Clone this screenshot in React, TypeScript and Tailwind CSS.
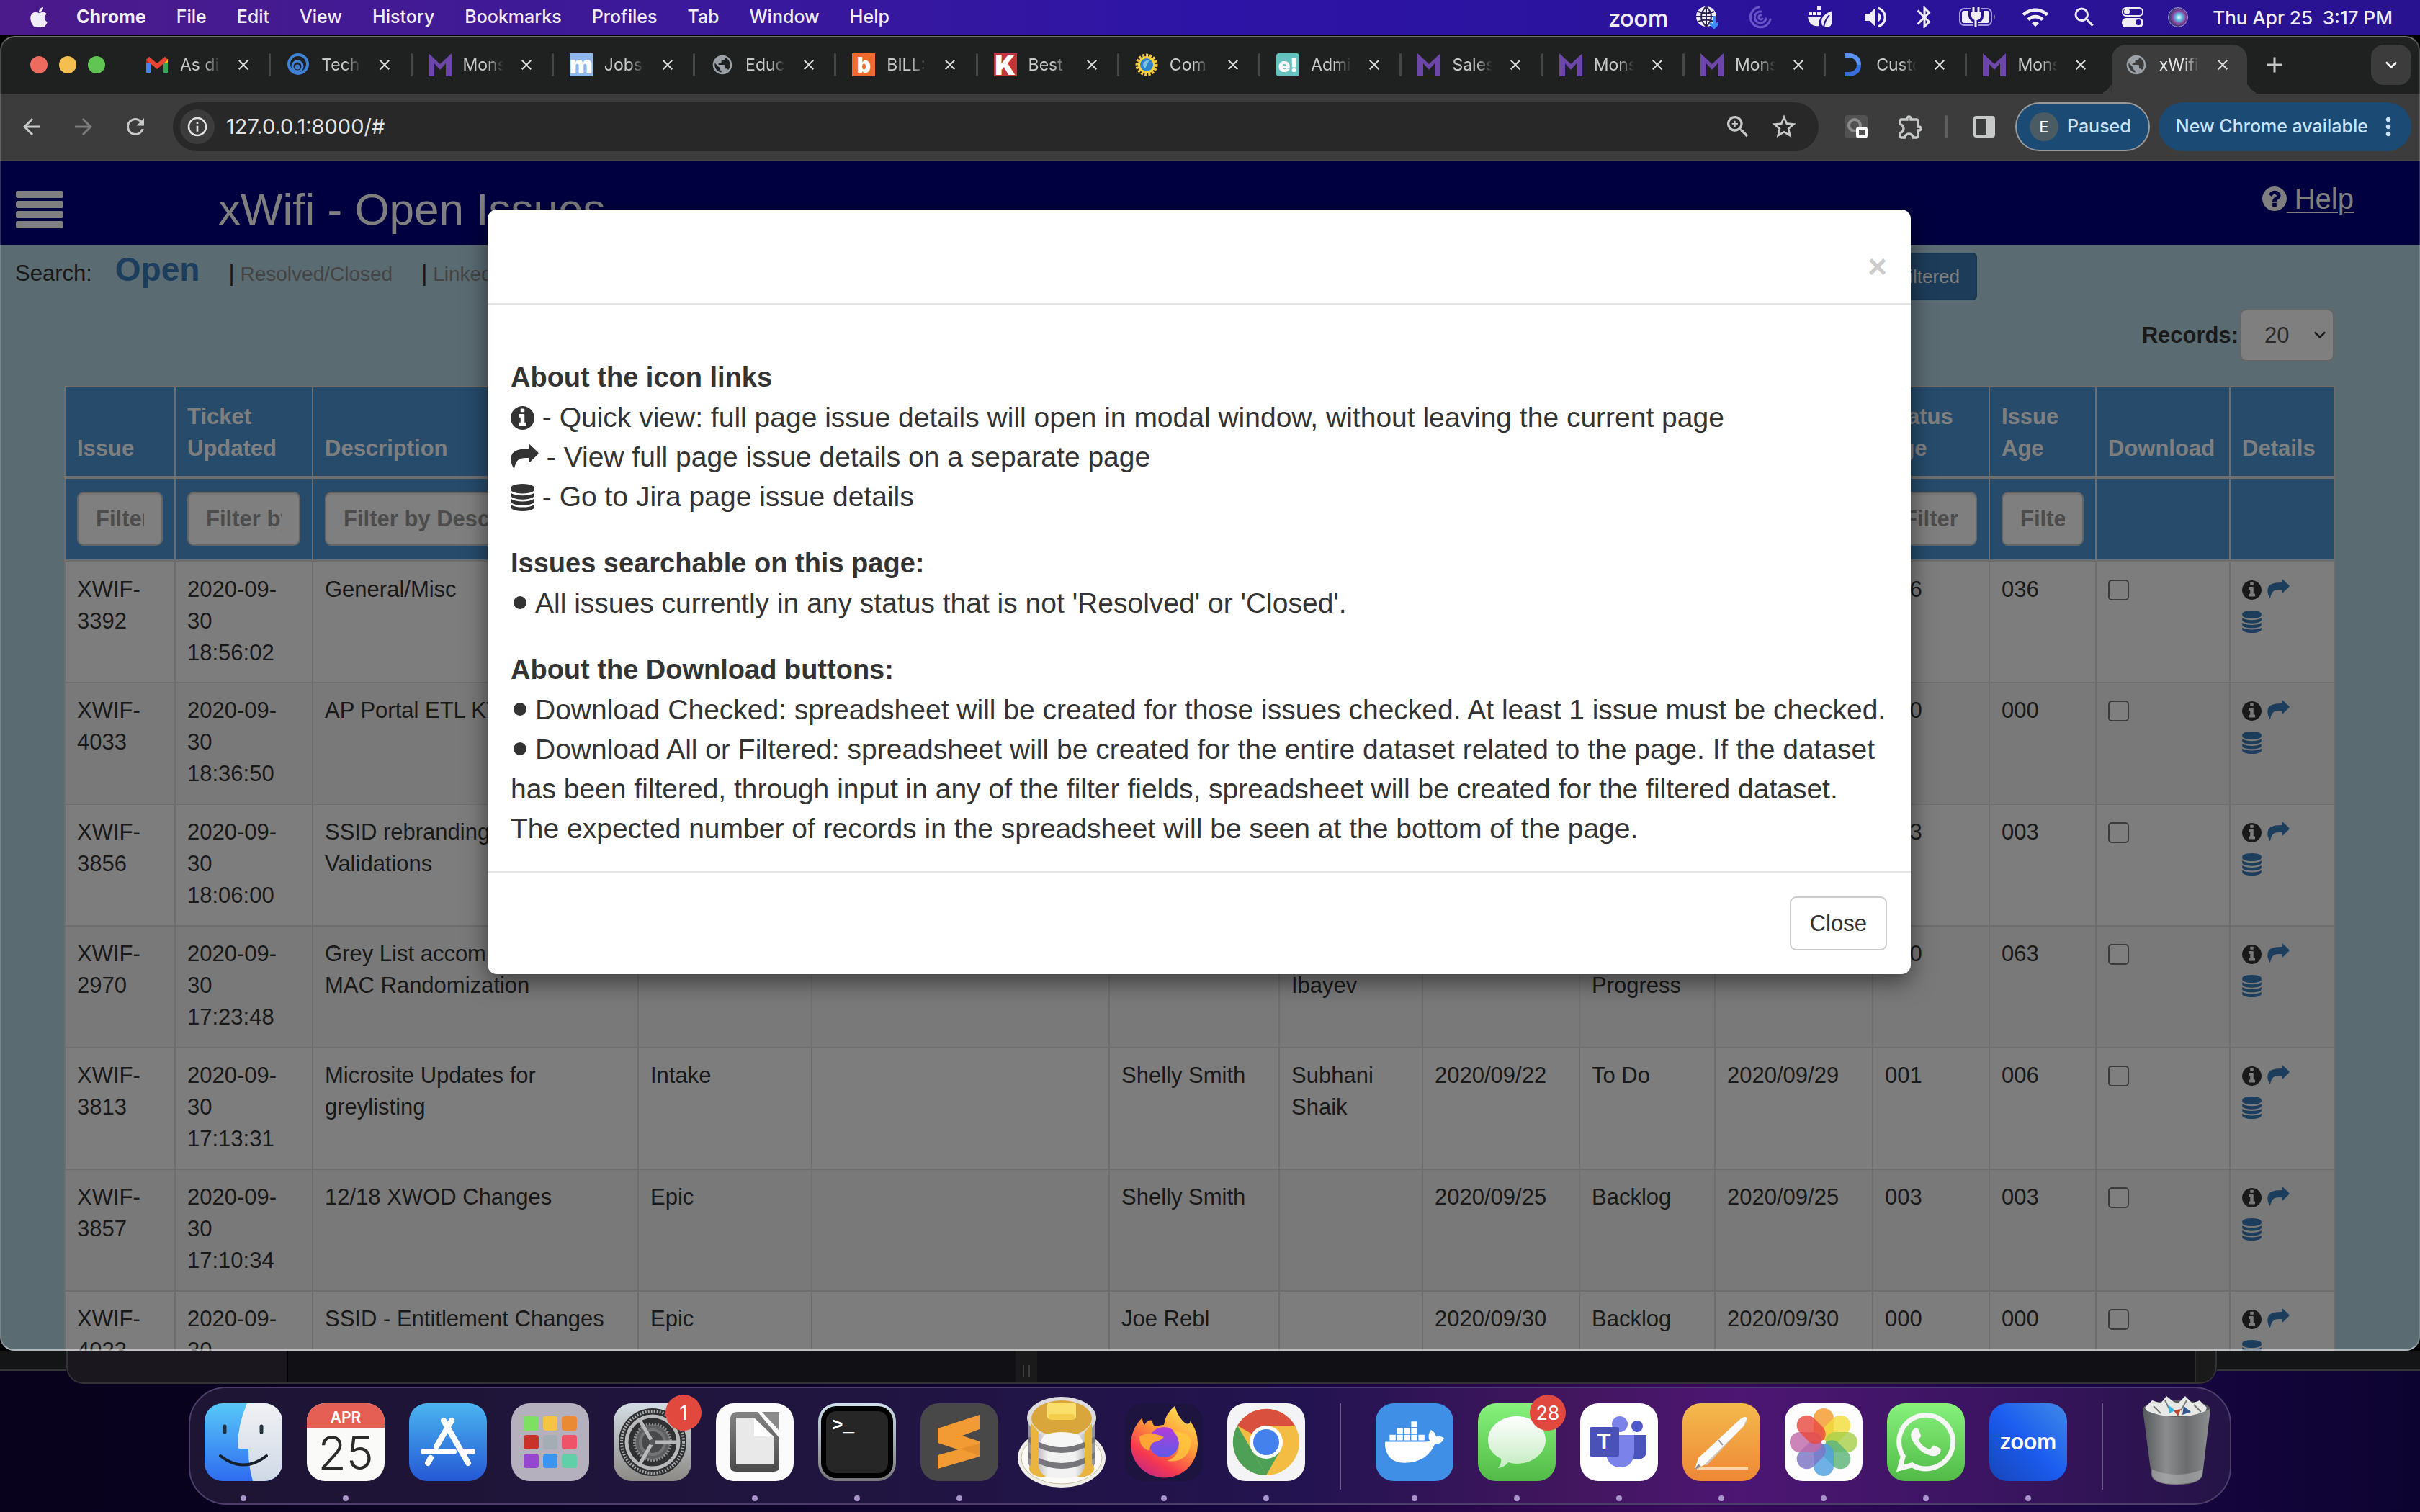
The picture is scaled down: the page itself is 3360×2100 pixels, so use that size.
import React from "react";
import { FaApple, FaDocker, FaWhatsapp } from "react-icons/fa";
import {
  MdArrowBack,
  MdArrowForward,
  MdRefresh,
  MdOutlineInfo,
  MdClose,
  MdStarBorder,
  MdZoomIn,
  MdOutlineExtension,
  MdPublic,
  MdWifi,
  MdBluetooth,
  MdVolumeUp,
  MdSearch,
  MdAdd,
  MdMoreVert,
  MdKeyboardArrowDown,
} from "react-icons/md";

/* ---------- Page glyphs ---------- */

const CIRCLE =
  "m640 416q0 209-103 385.5t-279.5 279.5-385.5 103-385.5-103-279.5-279.5-103-385.5 103-385.5 279.5-279.5 385.5-103 385.5 103 279.5 279.5 103 385.5z";

function InfoIcon({ className }: { className: string }) {
  return (
    <svg viewBox="128 128 1536 1536" className={className} fill="currentColor" aria-hidden="true">
      <path
        d={
          "M1152 1376v-160q0-14-9-23t-23-9h-96v-512q0-14-9-23t-23-9h-320q-14 0-23 9t-9 23v160q0 14 9 23t23 9h96v320h-96q-14 0-23 9t-9 23v160q0 14 9 23t23 9h448q14 0 23-9t9-23zm-128-896v-160q0-14-9-23t-23-9h-192q-14 0-23 9t-9 23v160q0 14 9 23t23 9h192q14 0 23-9t9-23z" +
          CIRCLE
        }
      />
    </svg>
  );
}

function QuestionIcon({ className }: { className: string }) {
  return (
    <svg viewBox="128 128 1536 1536" className={className} fill="currentColor" aria-hidden="true">
      <path d="M1024 1376v-192q0-14-9-23t-23-9h-192q-14 0-23 9t-9 23v192q0 14 9 23t23 9h192q14 0 23-9t9-23zm256-672q0-88-55.5-163t-138.5-116-170-41q-243 0-371 213-15 24 8 42l132 100q7 6 19 6 16 0 25-12 53-68 86-92 34-24 86-24 48 0 85.5 26t37.5 59q0 38-20 61t-68 45q-63 28-115.5 86.5t-52.5 125.5v36q0 14 9 23t23 9h192q14 0 23-9t9-23q0-19 21.5-49.5t54.5-49.5q32-18 49-28.5t46-35 44.5-48 28-60.5 12.5-81zm384 192q0 209-103 385.5t-279.5 279.5-385.5 103-385.5-103-279.5-279.5-103-385.5 103-385.5 279.5-279.5 385.5-103 385.5 103 279.5 279.5 103 385.5z" />
    </svg>
  );
}

function ShareIcon({ className }: { className: string }) {
  return (
    <svg viewBox="0 0 92 82" className={className} fill="currentColor" aria-hidden="true">
      <path d="M60 2Q60 0 62 0L91 27Q93 30 91 33L63 60Q60 61 60 58V46C28 44 18 50 11 82Q9 82 8 79C2 66 0 60 0 50C1 24 18 15 60 15Z" />
    </svg>
  );
}

function DatabaseIcon({ className }: { className: string }) {
  return (
    <svg viewBox="128 0 1536 1792" className={className} fill="currentColor" aria-hidden="true">
      <path d="M896 768q237 0 443-43t325-127v170q0 69-103 128t-280 93.5-385 34.5-385-34.5-280-93.5-103-128v-170q119 84 325 127t443 43zm0 768q237 0 443-43t325-127v170q0 69-103 128t-280 93.5-385 34.5-385-34.5-280-93.5-103-128v-170q119 84 325 127t443 43zm0-384q237 0 443-43t325-127v170q0 69-103 128t-280 93.5-385 34.5-385-34.5-280-93.5-103-128v-170q119 84 325 127t443 43zm0-1152q208 0 385 34.5t280 93.5 103 128v128q0 69-103 128t-280 93.5-385 34.5-385-34.5-280-93.5-103-128v-128q0-69 103-128t280-93.5 385-34.5z" />
    </svg>
  );
}

/* ---------- Menu bar ---------- */

const MENUS = ["File", "Edit", "View", "History", "Bookmarks", "Profiles", "Tab", "Window", "Help"];

function MenuBar() {
  return (
    <header className="flex h-12 shrink-0 items-center bg-linear-to-r from-[#4b1a8b] via-[#2d14a6] to-[#28128f] pl-[38px] pr-[38px] font-['Inter',sans-serif] text-[25px] font-medium text-[#f1edf8]">
      <FaApple className="mr-9 size-8" aria-label="Apple menu" />
      <nav className="flex items-center gap-[42px]">
        <button className="font-bold">Chrome</button>
        {MENUS.map((m) => (
          <button key={m}>{m}</button>
        ))}
      </nav>
      <div className="ml-auto flex items-center gap-[38px]">
        <span className="font-['Lato',sans-serif] text-[34px] leading-none font-semibold">zoom</span>
        <svg viewBox="0 0 32 32" className="size-8" fill="none" aria-hidden="true">
          <circle cx="15" cy="15" r="14" fill="#f1edf8" />
          <path d="M1 15h28M15 1v28M4 8q11 5 22 0M4 22q11-5 22 0M15 1q-14 14 0 28M15 1q14 14 0 28" stroke="#2b2150" strokeWidth="2" />
          <path d="M26 14v16M20 24l6 6 6-6" stroke="#3d8bf5" strokeWidth="4" />
        </svg>
        <svg viewBox="0 0 32 32" className="mr-3 ml-1 size-8 text-[#6a55c8]" fill="none" stroke="currentColor" strokeWidth="3" strokeLinecap="round" aria-hidden="true">
          <path d="M14 2A14 14 0 1 0 30 19M17 8A8 8 0 1 0 24 18M17 13a3 3 0 1 0 2 5" />
        </svg>
        <svg viewBox="0 0 36 32" className="h-8 w-9" fill="currentColor" aria-hidden="true">
          <path d="M13 1h5v5h-5zM1 8h5v5H1zM7 8h5v5H7zM13 8h5v5h-5zM0 15h19q-5 6-3 13-14 2-16-13z" />
          <path d="M34 6q-16 5-16 16 0 9 8 9 9 0 9-12 0-7-1-13zM30 13q-7 7-8 18" stroke="#28128f" strokeWidth="2" />
        </svg>
        <MdVolumeUp className="size-10" aria-hidden="true" />
        <MdBluetooth className="-mx-2 size-9" aria-hidden="true" />
        <svg viewBox="0 0 52 28" className="h-7 w-[52px]" fill="none" aria-hidden="true">
          <rect x="1" y="2" width="44" height="23" rx="6" stroke="#a79cdb" strokeWidth="2" />
          <path d="M48 9q4 4 0 9z" fill="#a79cdb" />
          <rect x="4" y="5" width="38" height="17" rx="3" fill="currentColor" />
          <path d="M20 0v6M27 0v6M16 7h15v5q0 6-7 6t-8-6zM23 16v12" stroke="#28128f" strokeWidth="6" />
          <path d="M20 0v7M27 0v7M23 16v12" stroke="currentColor" strokeWidth="3" />
          <path d="M17 7h13v5q0 6-6 6t-7-6z" fill="currentColor" />
        </svg>
        <MdWifi className="-mx-1 size-10" aria-hidden="true" />
        <MdSearch className="-mx-1 size-9" aria-hidden="true" />
        <svg viewBox="0 0 30 28" className="h-7 w-[30px]" aria-hidden="true">
          <rect x="1" y="1" width="28" height="11" rx="5" fill="none" stroke="currentColor" strokeWidth="2" />
          <circle cx="7" cy="6" r="4" fill="currentColor" />
          <rect x="0" y="15" width="30" height="13" rx="6" fill="currentColor" />
          <circle cx="23" cy="21" r="4" fill="#28128f" />
        </svg>
        <span className="-mr-1 -ml-1 size-7 rounded-full border border-[#a79cdb] bg-[radial-gradient(circle_at_55%_50%,#ffffff_0%,#5fc4e8_22%,#8a3f9a_48%,#27406e_72%,#c04a6a_100%)]" />
        <span className="text-[26px] whitespace-pre">Thu Apr 25  3:17 PM</span>
      </div>
    </header>
  );
}

/* ---------- Browser tabs ---------- */

function MonsterIcon() {
  return (
    <svg viewBox="0 0 32 32" className="size-8" fill="#6c46a8" aria-hidden="true">
      <path d="M0 0 16 15 32 0V32H24V14L16 23 8 14V32H0Z" />
    </svg>
  );
}

function Favicon({ kind }: { kind: string }) {
  if (kind === "gmail")
    return (
      <svg viewBox="0 0 32 32" className="size-8" fill="none" strokeWidth="6" aria-hidden="true">
        <path d="M4 12V27" stroke="#4285f4" />
        <path d="M28 12V27" stroke="#34a853" />
        <path d="M28 14V8" stroke="#fbbc04" />
        <path d="M4 14V8" stroke="#c5221f" />
        <path d="M3 7 16 18 29 7" stroke="#ea4335" />
      </svg>
    );
  if (kind === "swirl")
    return (
      <svg viewBox="0 0 32 32" className="size-8" fill="none" stroke="#3f83d8" strokeWidth="4" aria-hidden="true">
        <circle cx="16" cy="15" r="13" />
        <circle cx="15" cy="18" r="7" strokeWidth="3" />
        <circle cx="15" cy="19" r="2" strokeWidth="3" />
      </svg>
    );
  if (kind === "monster") return <MonsterIcon />;
  if (kind === "jobs")
    return (
      <span className="flex size-8 items-center justify-center bg-[#8fb8f0] font-['Inter',sans-serif] text-[34px] leading-[28px] font-black text-white">
        m
      </span>
    );
  if (kind === "globe") return <MdPublic className="size-8 text-[#9aa0a6]" aria-hidden="true" />;
  if (kind === "bill")
    return (
      <span className="flex size-8 items-center justify-center bg-[#f26a30] font-['Inter',sans-serif] text-[30px] leading-none font-black text-white">
        b
      </span>
    );
  if (kind === "kforce")
    return (
      <span className="flex size-8 items-center justify-center bg-[#c4353b] font-['Inter',sans-serif] text-[38px] leading-none font-black text-white">
        K
      </span>
    );
  if (kind === "sun")
    return (
      <svg viewBox="0 0 32 32" className="size-8" aria-hidden="true">
        <circle cx="16" cy="16" r="13" fill="none" stroke="#f5c83a" strokeWidth="5" strokeDasharray="3 2" />
        <circle cx="16" cy="16" r="12" fill="#f5d03a" />
        <circle cx="16" cy="16" r="9" fill="#2d86cc" />
        <path d="M14 21 20 9q-9 1-9 8z" fill="#7ec3ea" />
      </svg>
    );
  if (kind === "edcast")
    return (
      <span className="flex size-8 items-center justify-center rounded-[4px] bg-[#67c2bf] font-['Inter',sans-serif] text-[27px] leading-none font-black text-white">
        e!
      </span>
    );
  return (
    <svg viewBox="0 0 32 32" className="size-8" fill="none" strokeWidth="6" aria-hidden="true">
      <path d="M4 3h8q12 2 12 13" stroke="#5b8ff0" />
      <path d="M24 16q0 11-12 13H4" stroke="#3a6fe0" />
    </svg>
  );
}

const TABS: [string, string][] = [
  ["gmail", "As di"],
  ["swirl", "Tech"],
  ["monster", "Mons"],
  ["jobs", "Jobs"],
  ["globe", "Educ"],
  ["bill", "BILL:"],
  ["kforce", "Best"],
  ["sun", "Com"],
  ["edcast", "Admi"],
  ["monster", "Sales"],
  ["monster", "Mons"],
  ["monster", "Mons"],
  ["arc", "Custo"],
  ["monster", "Mons"],
  ["globe", "xWifi"],
];

function TabStrip() {
  return (
    <div className="flex h-20 shrink-0 bg-[#1f2120] pr-3 font-['Inter',sans-serif] text-[23px] text-[#c7c9c8]">
      <div className="flex w-[180px] shrink-0 items-center gap-4 pl-[42px]">
        <button aria-label="Close window" className="size-6 rounded-full bg-[#ed6a5f]" />
        <button aria-label="Minimise window" className="size-6 rounded-full bg-[#f5bf4f]" />
        <button aria-label="Zoom window" className="size-6 rounded-full bg-[#61c554]" />
      </div>
      <div role="tablist" className="flex min-w-0 flex-1">
        {TABS.map(([kind, label], i) => {
          const active = i === TABS.length - 1;
          return (
            <div key={i} className="relative flex min-w-0 flex-1 items-center">
              {active && (
                <div className="absolute inset-x-1 top-3 bottom-0 rounded-t-[20px] bg-[#3c3c3c]">
                  <span className="absolute bottom-0 -left-5 size-5 rounded-br-[20px] bg-[#1f2120] shadow-[8px_8px_0_0_#3c3c3c] [clip-path:inset(0)]" />
                  <span className="absolute -right-5 bottom-0 size-5 rounded-bl-[20px] bg-[#1f2120] shadow-[-8px_8px_0_0_#3c3c3c] [clip-path:inset(0)]" />
                </div>
              )}
              <div className="relative flex min-w-0 flex-1 items-center pl-[22px]">
                <button role="tab" aria-selected={active} className="flex items-center gap-4">
                  <Favicon kind={kind} />
                  <span
                    className={
                      "w-[56px] overflow-hidden text-left whitespace-nowrap [mask-image:linear-gradient(to_right,black_60%,transparent)] " +
                      (active ? "text-[#e6e8e7]" : "")
                    }
                  >
                    {label}
                  </span>
                </button>
                <button aria-label={"Close " + label} className="ml-5">
                  <MdClose className="size-6 text-[#dcdedd]" />
                </button>
              </div>
              {i < TABS.length - 2 && <span className="h-8 w-[3px] rounded-full bg-[#454746]" />}
            </div>
          );
        })}
      </div>
      <div className="flex w-[224px] shrink-0 items-center justify-between">
        <button aria-label="New tab" className="ml-4">
          <MdAdd className="size-9" />
        </button>
        <button aria-label="Search tabs" className="flex size-14 items-center justify-center rounded-[18px] bg-[#3c3c3c] text-white">
          <MdKeyboardArrowDown className="size-8" />
        </button>
      </div>
    </div>
  );
}

function Toolbar() {
  return (
    <div className="flex h-[94px] shrink-0 items-center border-b-2 border-[#474747] bg-[#3c3c3c] pr-3 pl-[26px] font-['Inter',sans-serif] text-[#c7c9c8]">
      <div className="flex w-[214px] shrink-0 items-center gap-9">
        <button aria-label="Back">
          <MdArrowBack className="size-9" />
        </button>
        <button aria-label="Forward" className="text-[#7c7c7c]">
          <MdArrowForward className="size-9" />
        </button>
        <button aria-label="Reload">
          <MdRefresh className="size-9" />
        </button>
      </div>
      <div className="flex h-[68px] min-w-0 flex-1 items-center rounded-full bg-[#282828] pr-7 pl-[10px]">
        <button aria-label="Site information" className="flex size-12 items-center justify-center rounded-full bg-[#3c3c3c] text-[#e3e3e3]">
          <MdOutlineInfo className="size-8" />
        </button>
        <input
          aria-label="Address"
          defaultValue="127.0.0.1:8000/#"
          className="ml-4 min-w-0 flex-1 bg-transparent text-[29px] text-[#e3e3e3] outline-none"
        />
        <button aria-label="Zoom level" className="mr-6">
          <MdZoomIn className="size-10" />
        </button>
        <button aria-label="Bookmark this page">
          <MdStarBorder className="size-10" />
        </button>
      </div>
      <div className="flex shrink-0 items-center">
        <button aria-label="Extension" className="relative ml-9 size-8 rounded bg-[#525252]">
          <span className="absolute top-1 left-1 h-5 w-5 rounded-full border-4 border-[#8d8d8d]" />
          <span className="absolute right-0 bottom-0 size-4 rounded-sm border-4 border-white bg-[#555]" />
        </button>
        <button aria-label="Extensions" className="ml-10">
          <MdOutlineExtension className="size-10" />
        </button>
        <span className="ml-7 h-8 w-[3px] rounded-full bg-[#5f5f5f]" />
        <button aria-label="Side panel" className="ml-9">
          <svg viewBox="0 0 30 30" className="size-[30px]" aria-hidden="true">
            <rect x="2" y="2" width="26" height="26" rx="2" fill="none" stroke="currentColor" strokeWidth="4" />
            <rect x="18" y="2" width="10" height="26" fill="currentColor" />
          </svg>
        </button>
        <button className="ml-7 flex h-[68px] items-center gap-3 rounded-full border-2 border-[#9a9a9a] bg-[#1b4a74] pr-6 pl-[18px] text-[25px] font-medium text-[#c8e4fb]">
          <span className="flex size-10 items-center justify-center rounded-full bg-[#4a5b64] text-[22px] font-normal text-white">E</span>
          Paused
        </button>
        <button className="ml-3 flex h-[68px] items-center gap-2 rounded-full bg-[#1b4a74] pr-3 pl-6 text-[25px] font-medium text-[#c8e4fb]">
          New Chrome available
          <MdMoreVert className="size-10" aria-hidden="true" />
        </button>
      </div>
    </div>
  );
}

/* ---------- Issues page ---------- */

type Column = { name: string; width: string; filter: string };

const COLUMNS: Column[] = [
  { name: "Issue", width: "w-[153px]", filter: "Filter by Issue" },
  { name: "Ticket Updated", width: "w-[191px]", filter: "Filter by Updated" },
  { name: "Description", width: "w-[452px]", filter: "Filter by Description" },
  { name: "", width: "w-[241px]", filter: "" },
  { name: "", width: "w-[413px]", filter: "" },
  { name: "", width: "w-[236px]", filter: "" },
  { name: "", width: "w-[199px]", filter: "" },
  { name: "", width: "w-[218px]", filter: "" },
  { name: "", width: "w-[188px]", filter: "" },
  { name: "", width: "w-[219px]", filter: "" },
  { name: "Status Age", width: "w-[162px]", filter: "Filter by Age" },
  { name: "Issue Age", width: "w-[148px]", filter: "Filter by Age" },
  { name: "Download", width: "w-[186px]", filter: "" },
  { name: "Details", width: "w-[145px]", filter: "" },
];

const ROWS: string[][] = [
  ["XWIF-3392", "2020-09-30 18:56:02", "General/Misc", "", "", "", "", "", "", "", "036", "036"],
  ["XWIF-4033", "2020-09-30 18:36:50", "AP Portal ETL KT", "", "", "", "", "", "", "", "000", "000"],
  ["XWIF-3856", "2020-09-30 18:06:00", "SSID rebranding -\nValidations", "", "", "", "", "", "", "", "003", "003"],
  ["XWIF-2970", "2020-09-30 17:23:48", "Grey List accommodate\nMAC Randomization", "", "", "", "\nIbayev", "", "In\nProgress", "", "000", "063"],
  ["XWIF-3813", "2020-09-30 17:13:31", "Microsite Updates for\ngreylisting", "Intake", "", "Shelly Smith", "Subhani Shaik", "2020/09/22", "To Do", "2020/09/29", "001", "006"],
  ["XWIF-3857", "2020-09-30 17:10:34", "12/18 XWOD Changes", "Epic", "", "Shelly Smith", "", "2020/09/25", "Backlog", "2020/09/25", "003", "003"],
  ["XWIF-4023", "2020-09-30 17:05:12", "SSID - Entitlement Changes", "Epic", "", "Joe Rebl", "", "2020/09/30", "Backlog", "2020/09/30", "000", "000"],
];

function IssuesTable() {
  return (
    <table className="w-full table-fixed border-collapse border-2 border-[#dddddd] text-left">
      <colgroup>
        {COLUMNS.map((c, i) => (
          <col key={i} className={c.width} />
        ))}
      </colgroup>
      <thead className="bg-[#4c96d6] text-white">
        <tr>
          {COLUMNS.map((c, i) => (
            <th key={i} scope="col" className="h-[126px] border-x-2 border-b-4 border-[#dddddd] px-4 pt-4 pb-4 align-bottom font-bold">
              {c.name}
            </th>
          ))}
        </tr>
        <tr>
          {COLUMNS.map((c, i) => (
            <td key={i} className="h-[116px] border-x-2 border-b-4 border-[#dddddd] px-4 pt-[18px] pb-4 align-top">
              {c.filter && (
                <input
                  type="text"
                  aria-label={c.filter}
                  placeholder={c.filter}
                  className="block h-[75px] w-full rounded-[9px] border-2 border-[#cccccc] bg-white px-6 font-bold shadow-[inset_0_2px_2px_rgba(0,0,0,0.08)] placeholder:text-[#999999]"
                />
              )}
            </td>
          ))}
        </tr>
      </thead>
      <tbody>
        {ROWS.map((row) => (
          <tr key={row[0]} className="odd:bg-[#fbfbfb] even:bg-[#f2f2f2]">
            {row.map((cell, i) => (
              <td key={i} className="h-[169px] border-2 border-[#dddddd] px-4 pt-4 pb-4 align-top whitespace-pre-line">
                {cell}
              </td>
            ))}
            <td className="border-2 border-[#dddddd] px-4 pt-4 align-top">
              <input
                type="checkbox"
                aria-label={"Download " + row[0]}
                className="mt-2 block size-[29px] appearance-none rounded-[5px] border-2 border-[#767676] bg-white"
              />
            </td>
            <td className="border-2 border-[#dddddd] px-4 pt-4 align-top">
              <div className="flex h-11 items-center gap-2 text-[#3a7ab8]">
                <a href="#" aria-label={"Quick view " + row[0]} className="text-[#333333]">
                  <InfoIcon className="size-[27px]" />
                </a>
                <a href="#" aria-label={"Full page " + row[0]}>
                  <ShareIcon className="mb-1 h-[27px] w-[31px]" />
                </a>
              </div>
              <a href="#" aria-label={"Jira page " + row[0]} className="flex h-11 items-center text-[#3a7ab8]">
                <DatabaseIcon className="h-[31px] w-[27px]" />
              </a>
            </td>
          </tr>
        ))}
      </tbody>
    </table>
  );
}

function HelpDialog() {
  return (
    <div role="dialog" aria-modal="true" aria-label="Help" className="w-full max-w-[1976px] rounded-[13px] bg-white text-[39px] leading-[55px] text-[#333333] shadow-[0_10px_32px_rgba(0,0,0,0.5)]">
      <div className="flex h-[132px] items-center justify-end border-b-2 border-[#e5e5e5] px-[33px]">
        <button aria-label="Close dialog" className="mt-7 text-[46px] leading-none font-bold text-[#cccccc]">
          ×
        </button>
      </div>
      <div className="flex flex-col gap-[38px] pt-[74px] pr-7 pb-8 pl-8">
        <section>
          <h4 className="text-[38px] font-bold">About the icon links</h4>
          <p>
            <InfoIcon className="mb-1 inline size-[33px]" /> - Quick view: full page issue details will open in modal window, without leaving the current page
          </p>
          <p>
            <ShareIcon className="mb-2 inline h-[34px] w-[39px]" /> - View full page issue details on a separate page
          </p>
          <p>
            <DatabaseIcon className="mb-1 inline h-[38px] w-[33px]" /> - Go to Jira page issue details
          </p>
        </section>
        <section>
          <h4 className="text-[38px] font-bold">Issues searchable on this page:</h4>
          <p>
            <Bullet />
            All issues currently in any status that is not 'Resolved' or 'Closed'.
          </p>
        </section>
        <section>
          <h4 className="text-[38px] font-bold">About the Download buttons:</h4>
          <p>
            <Bullet />
            Download Checked: spreadsheet will be created for those issues checked. At least 1 issue must be checked.
          </p>
          <p>
            <Bullet />
            Download All or Filtered: spreadsheet will be created for the entire dataset related to the page. If the dataset has been filtered, through input in any of the filter fields, spreadsheet will be created for the filtered dataset.
          </p>
          <p>The expected number of records in the spreadsheet will be seen at the bottom of the page.</p>
        </section>
      </div>
      <div className="flex justify-end border-t-2 border-[#e5e5e5] px-[33px] py-[33px]">
        <button className="h-[75px] rounded-[9px] border-2 border-[#cccccc] bg-white px-[26px] text-[31px] leading-[44px]">Close</button>
      </div>
    </div>
  );
}

function Bullet() {
  return <span className="mr-3 ml-1 inline-block size-[18px] rounded-full bg-[#333333] align-[5px]" />;
}

function Page() {
  return (
    <main className="relative min-h-0 flex-1 overflow-hidden bg-[#b5d6e4] font-['Liberation_Sans',Arial,sans-serif] text-[31px] leading-[44px] text-[#333333]">
      <div className="flex h-[116px] items-center bg-[#000080] pt-[18px] pr-[92px] pl-[22px] text-white">
        <button aria-label="Menu" className="flex w-[66px] flex-col gap-1">
          <span className="h-[10px] rounded-[3px] bg-white" />
          <span className="h-[10px] rounded-[3px] bg-white" />
          <span className="h-[10px] rounded-[3px] bg-white" />
          <span className="h-[10px] rounded-[3px] bg-white" />
        </button>
        <h2 className="ml-[215px] text-[62px] leading-[62px]">xWifi - Open Issues</h2>
        <a href="#" className="mt-3 ml-auto flex items-center self-start text-[40px] leading-[44px]">
          <QuestionIcon className="size-[34px]" />
          <span className="whitespace-pre underline decoration-2 underline-offset-4"> Help</span>
        </a>
      </div>
      <div className="flex items-start pb-3">
        <nav aria-label="Issue lists" className="flex items-baseline pt-1 pl-[21px]">
          <span>Search:</span>
          <a href="#" className="ml-8 text-[46px] leading-[60px] font-bold text-[#3a7ab8]">
            Open
          </a>
          <span className="ml-10">|</span>
          <a href="#" className="ml-2 text-[28px] text-[#888888]">
            Resolved/Closed
          </a>
          <span className="ml-10">|</span>
          <a href="#" className="ml-2 text-[28px] text-[#888888]">
            Linked
          </a>
        </nav>
        <button className="mt-[11px] mr-[615px] ml-auto h-[66px] rounded-[6px] border-2 border-[#2e6da4] bg-[#3a78b4] px-[22px] text-[26px] text-white">
          Download All or Filtered
        </button>
      </div>
      <div className="flex items-center justify-end gap-[2px] pr-[119px]">
        <label htmlFor="records" className="font-bold">
          Records:
        </label>
        <div className="relative">
          <select
            id="records"
            defaultValue="20"
            className="h-[73px] w-[131px] appearance-none rounded-[9px] border-2 border-[#cccccc] bg-white pl-8 text-[#555555]"
          >
            <option>20</option>
          </select>
          <MdKeyboardArrowDown className="pointer-events-none absolute top-5 right-1 size-8 text-[#333333]" aria-hidden="true" />
        </div>
      </div>
      <div className="pt-[34px] pr-[119px] pl-[89px]">
        <IssuesTable />
      </div>
      <div className="absolute inset-0 flex items-start justify-center bg-black/50 pt-[67px] pr-[30px]">
        <HelpDialog />
      </div>
    </main>
  );
}

/* ---------- Dock ---------- */

function Grad({ id, from, to }: { id: string; from: string; to: string }) {
  return (
    <linearGradient id={id} x1="0" y1="0" x2="0" y2="1">
      <stop offset="0" stopColor={from} />
      <stop offset="1" stopColor={to} />
    </linearGradient>
  );
}

const TILE = "size-[108px] overflow-hidden rounded-[25px]";

function Finder() {
  return (
    <svg viewBox="0 0 108 108" className={TILE} aria-hidden="true">
      <defs>
        <Grad id="fL" from="#57c8f8" to="#2f6cf0" />
        <Grad id="fR" from="#f1f1f5" to="#cfd9e6" />
      </defs>
      <rect width="108" height="108" fill="url(#fL)" />
      <path d="M59 0Q46 30 46 60Q46 63 49 63H60Q61 63 61 66Q61 88 67 108H108V0Z" fill="url(#fR)" />
      <path d="M28 32v8M79 32v8" stroke="#22303c" strokeWidth="5" strokeLinecap="round" />
      <path d="M22 73Q54 98 86 73" fill="none" stroke="#16202c" strokeWidth="4" strokeLinecap="round" />
    </svg>
  );
}

function Calendar() {
  return (
    <div className="flex size-[108px] flex-col items-center overflow-hidden rounded-[25px] bg-[#fafaf8] font-['Inter',sans-serif]">
      <div className="flex h-[34px] w-full shrink-0 items-center justify-center bg-[#e65f54] pt-1 text-[21px] leading-none font-semibold text-white">APR</div>
      <div className="text-[64px] leading-[70px] font-light text-[#2b2b2b]">25</div>
    </div>
  );
}

function AppStore() {
  return (
    <svg viewBox="0 0 108 108" className={TILE} aria-hidden="true">
      <defs>
        <Grad id="as" from="#4ab4f0" to="#2558d4" />
      </defs>
      <rect width="108" height="108" fill="url(#as)" />
      <g stroke="#fff" strokeWidth="8" strokeLinecap="round">
        <path d="M20 67H62M77 67H88" />
        <path d="M59 24 38 60M30 76 26 83" />
        <path d="M48 24 82 83" />
      </g>
    </svg>
  );
}

const PADS = ["#7ee063", "#f6c445", "#ea8a34", "#c8322a", "#a3adb3", "#ee5368", "#9548cf", "#3a94f2", "#63cfa8"];

function Launchpad() {
  return (
    <div className="grid size-[108px] grid-cols-3 content-center justify-center gap-[6px] rounded-[25px] bg-[#b4b0bd] px-[17px]">
      {PADS.map((c) => (
        <span key={c} className="h-5 rounded-[4px]" style={{ backgroundColor: c }} />
      ))}
    </div>
  );
}

function Settings() {
  return (
    <svg viewBox="0 0 108 108" className={TILE} fill="none" aria-hidden="true">
      <defs>
        <Grad id="st" from="#d3dde3" to="#8c8a86" />
      </defs>
      <rect width="108" height="108" fill="url(#st)" />
      <circle cx="54" cy="54" r="47" fill="#2f3032" />
      <circle cx="54" cy="54" r="43" stroke="#a9abac" strokeWidth="4" strokeDasharray="2 2" />
      <circle cx="54" cy="54" r="36" stroke="#b7b9ba" strokeWidth="5" />
      <circle cx="54" cy="54" r="25" fill="#5d5f60" stroke="#8b8d8e" strokeWidth="4" strokeDasharray="2 2" />
      <circle cx="54" cy="54" r="17" fill="#47494a" stroke="#727475" strokeWidth="4" />
      <path d="M54 54H90M54 54 36 23M54 54 36 85" stroke="#b7b9ba" strokeWidth="5" />
      <circle cx="54" cy="54" r="4" fill="#56585a" />
    </svg>
  );
}

function LibreOffice() {
  return (
    <svg viewBox="0 0 108 108" className={TILE} aria-hidden="true">
      <defs>
        <Grad id="lo" from="#838383" to="#4b4b4b" />
      </defs>
      <rect width="108" height="108" fill="#fbfbfb" />
      <path d="M30 12H58L88 48V88Q88 95 80 95H28Q20 95 20 88V22Q20 12 30 12Z" fill="url(#lo)" />
      <path d="M28 20H53V46H80V85H28Z" fill="#e9e9e9" />
      <path d="M53 20 80 46H53Z" fill="#fff" />
      <path d="M64 12H88V38Z" fill="#8a8a8a" />
    </svg>
  );
}

function Terminal() {
  return (
    <div className="size-[108px] rounded-[25px] bg-linear-to-b from-[#cfe0e8] to-[#77777a] p-1">
      <div className="size-full rounded-[21px] bg-black p-[7px]">
        <div className="size-full rounded-[14px] bg-[#262626] pt-1 pl-2 text-left font-['Liberation_Mono',monospace] text-[26px] leading-[32px] font-bold text-white">
          {">_"}
        </div>
      </div>
    </div>
  );
}

function Sublime() {
  return (
    <svg viewBox="0 0 108 108" className={TILE} aria-hidden="true">
      <rect width="108" height="108" fill="#484848" />
      <path d="M82 16 24 35V55L82 74V53L58 45 82 36Z" fill="#f29b34" />
      <path d="M24 91V72L56 63 82 74Z" fill="#f29b34" />
      <path d="M56 63 82 73V56Z" fill="#e58d2b" />
    </svg>
  );
}

function Pancakes() {
  return (
    <svg viewBox="0 0 108 108" className="size-[108px] overflow-visible" aria-hidden="true">
      <defs>
        <linearGradient id="pk" x1="0" y1="0" x2="1" y2="0">
          <stop offset="0" stopColor="#8f8f93" />
          <stop offset="0.3" stopColor="#f2f2f2" />
          <stop offset="0.7" stopColor="#f2f2f2" />
          <stop offset="1" stopColor="#8f8f93" />
        </linearGradient>
      </defs>
      <ellipse cx="54" cy="76" rx="61" ry="41" fill="#efeee9" />
      <ellipse cx="54" cy="76" rx="56" ry="36" fill="#fbfaf6" stroke="#c9bf9d" strokeWidth="1" />
      <path d="M8 20H100V84Q94 103 54 104Q14 103 8 84Z" fill="url(#pk)" />
      <path d="M8 46Q54 76 100 46V54Q54 84 8 54ZM8 68Q54 98 100 68V76Q54 106 8 76Z" fill="#77777b" />
      <ellipse cx="54" cy="20" rx="48" ry="29" fill="#dcdce0" />
      <ellipse cx="54" cy="21" rx="42" ry="25" fill="#d9a63c" />
      <path d="M12 28V84Q4 92 16 100Q26 104 32 102Q20 94 22 80V40ZM96 28V84Q104 92 92 100Q82 104 76 102Q88 94 86 80V40Z" fill="#e9b53f" />
      <path d="M30 44Q54 36 78 44L84 54Q54 68 24 54Z" fill="#f6f6f6" />
      <rect x="34" y="-1" width="40" height="23" rx="4" fill="#fbdf6c" />
      <rect x="36" y="15" width="36" height="8" rx="3" fill="#f3cd4b" />
    </svg>
  );
}

function Firefox() {
  return (
    <svg viewBox="0 0 108 108" className={TILE} aria-hidden="true">
      <defs>
        <linearGradient id="ff" x1="0.8" y1="0" x2="0.2" y2="1">
          <stop offset="0" stopColor="#ffe55a" />
          <stop offset="0.4" stopColor="#ff9a36" />
          <stop offset="0.75" stopColor="#f5384f" />
          <stop offset="1" stopColor="#c0268c" />
        </linearGradient>
        <Grad id="fp" from="#b63ad8" to="#5a5ce8" />
      </defs>
      <rect width="108" height="108" fill="#1d1440" />
      <path d="M69 4Q74 20 84 28Q92 30 90 24Q101 38 101 56A46 46 0 0 1 8 58Q8 36 24 20Q24 26 27 30Q32 22 38 24Q38 30 42 32Q50 30 54 30Q56 14 69 4Z" fill="url(#ff)" />
      <circle cx="54" cy="54" r="21" fill="url(#fp)" />
      <path d="M20 46Q36 38 54 47Q48 53 40 54Q34 58 34 66Q20 62 20 46Z" fill="#ffa436" />
      <path d="M66 38Q78 50 74 66Q70 76 58 80Q90 84 92 50Q86 40 66 38Z" fill="#ffc93e" opacity="0.8" />
    </svg>
  );
}

function Chrome() {
  return (
    <svg viewBox="0 0 108 108" className={TILE} aria-hidden="true">
      <rect width="108" height="108" fill="#f4f4f7" />
      <circle cx="54" cy="54" r="46" fill="#f2bd42" />
      <path d="M54 54 14 31A46 46 0 0 1 94 31Z" fill="#d9503f" />
      <path d="M14 31 34 65 54 100A46 46 0 0 1 14 31Z" fill="#4ea057" />
      <path d="M54 100 74 65 94 31H54V54Z" fill="#f2bd42" />
      <path d="M14 31 34 65 74 65 54 100 34 65Z" fill="#4ea057" />
      <circle cx="54" cy="54" r="23" fill="#fff" />
      <circle cx="54" cy="54" r="18" fill="#4481ec" />
    </svg>
  );
}

function Docker() {
  return (
    <div className="flex size-[108px] items-center justify-center rounded-[25px] bg-[#3f8fe6]">
      <FaDocker className="size-[82px] text-white" aria-hidden="true" />
    </div>
  );
}

function Messages() {
  return (
    <svg viewBox="0 0 108 108" className={TILE} aria-hidden="true">
      <defs>
        <Grad id="mg" from="#86f27c" to="#52bb47" />
        <Grad id="mb" from="#ffffff" to="#c4ecc0" />
      </defs>
      <rect width="108" height="108" fill="url(#mg)" />
      <path d="M54 18C76 18 94 33 94 51S76 84 54 84Q48 84 42 82Q37 89 28 90Q33 84 32 77Q14 68 14 51C14 33 32 18 54 18Z" fill="url(#mb)" />
    </svg>
  );
}

function Teams() {
  return (
    <svg viewBox="0 0 108 108" className={TILE} aria-hidden="true">
      <rect width="108" height="108" fill="#fff" />
      <circle cx="79" cy="32" r="8" fill="#5059c9" />
      <path d="M70 44H92V66Q92 77 80 78Q72 78 70 72Z" fill="#4b53bc" />
      <circle cx="55" cy="29" r="11" fill="#7b83eb" />
      <path d="M36 44H75V68Q74 89 55 89Q38 88 36 70Z" fill="#7b83eb" />
      <rect x="13" y="33" width="41" height="41" rx="3" fill="#4a52b8" />
      <text x="33" y="64" textAnchor="middle" fontFamily="Liberation Sans" fontWeight="700" fontSize="31" fill="#fff">
        T
      </text>
    </svg>
  );
}

function Pages() {
  return (
    <svg viewBox="0 0 108 108" className={TILE} aria-hidden="true">
      <defs>
        <Grad id="pg" from="#f4b94c" to="#ee8836" />
      </defs>
      <rect width="108" height="108" fill="url(#pg)" />
      <rect x="20" y="89" width="71" height="4" fill="#fbd3a4" />
      <path d="M17 92 22 76 78 24Q86 17 89 20Q90 25 84 33L30 86Z" fill="#fafafa" />
      <path d="M30 86 84 33 89 22 88 28 34 86Z" fill="#c9c9c9" />
      <path d="M50 51 56 58" stroke="#999" strokeWidth="2" />
      <path d="M17 92 22 84 26 88Z" fill="#8b8b8b" />
    </svg>
  );
}

const PETALS = ["#f39a2d", "#f3dd3c", "#a8cf4a", "#5db37a", "#4f9fe0", "#7b74c4", "#c06aa8", "#e84b40"];

function Photos() {
  return (
    <svg viewBox="0 0 108 108" className={TILE} aria-hidden="true">
      <rect width="108" height="108" fill="#fdfdfd" />
      {PETALS.map((c, i) => (
        <rect key={c} x="40" y="7" width="28" height="45" rx="14" fill={c} opacity="0.82" transform={"rotate(" + i * 45 + " 54 54)"} />
      ))}
      <circle cx="54" cy="54" r="3" fill="#fff" />
    </svg>
  );
}

function WhatsApp() {
  return (
    <div className="flex size-[108px] items-center justify-center rounded-[25px] bg-linear-to-b from-[#86f27c] to-[#52bb47]">
      <FaWhatsapp className="size-[94px] text-[#f6f6f6]" aria-hidden="true" />
    </div>
  );
}

function Zoom() {
  return (
    <div className="flex size-[108px] items-center justify-center rounded-[25px] bg-linear-to-tr from-[#1745b8] via-[#1c5cf0] to-[#4189e6] pb-1 font-['Lato',sans-serif] text-[32px] leading-none font-bold text-white">
      zoom
    </div>
  );
}

function Trash() {
  return (
    <svg viewBox="0 0 108 108" className="size-[108px] overflow-visible" aria-hidden="true">
      <defs>
        <linearGradient id="tr" x1="0" y1="0" x2="1" y2="0">
          <stop offset="0" stopColor="#55585a" />
          <stop offset="0.35" stopColor="#8b8d8f" />
          <stop offset="0.65" stopColor="#6a6c6e" />
          <stop offset="1" stopColor="#8b8d8f" />
        </linearGradient>
      </defs>
      <ellipse cx="54" cy="8" rx="47" ry="12" fill="#55585b" />
      <path d="M10 6 20-4 32 0 40-10 50-2 56 0 66-10 76 0 86-4 96 6 92 18H16Z" fill="#e8e8e6" />
      <path d="M22 4 32 14M38-4 46 12M60 10 68-4M78 2 88 12" stroke="#77797b" strokeWidth="2" />
      <path d="M42 2 52 10 44 14Z" fill="#3fb5dc" />
      <path d="M64 4 74 12 62 16Z" fill="#35558f" />
      <path d="M50 10 60 8 56 18Z" fill="#b8492f" />
      <path d="M7 8Q54 30 101 8L90 100Q86 113 54 113Q22 113 19 100Z" fill="url(#tr)" />
      <path d="M20 92Q54 106 90 92L89 100Q84 112 54 112Q24 112 20 100Z" fill="#b5b7b9" opacity="0.5" />
    </svg>
  );
}

type DockItem = { name: string; icon: React.ReactNode; running?: boolean; badge?: string };

const LEFT_APPS: DockItem[] = [
  { name: "Finder", icon: <Finder />, running: true },
  { name: "Calendar", icon: <Calendar />, running: true },
  { name: "App Store", icon: <AppStore /> },
  { name: "Launchpad", icon: <Launchpad /> },
  { name: "System Settings", icon: <Settings />, badge: "1" },
  { name: "LibreOffice", icon: <LibreOffice />, running: true },
  { name: "Terminal", icon: <Terminal />, running: true },
  { name: "Sublime Text", icon: <Sublime />, running: true },
  { name: "Sequel Pro", icon: <Pancakes /> },
  { name: "Firefox", icon: <Firefox />, running: true },
  { name: "Chrome", icon: <Chrome />, running: true },
];

const RIGHT_APPS: DockItem[] = [
  { name: "Docker", icon: <Docker />, running: true },
  { name: "Messages", icon: <Messages />, running: true, badge: "28" },
  { name: "Teams", icon: <Teams />, running: true },
  { name: "Pages", icon: <Pages />, running: true },
  { name: "Photos", icon: <Photos />, running: true },
  { name: "WhatsApp", icon: <WhatsApp />, running: true },
  { name: "Zoom", icon: <Zoom />, running: true },
];

function DockApp({ app }: { app: DockItem }) {
  return (
    <button aria-label={app.name} className="relative flex flex-col items-center">
      {app.icon}
      {app.badge && (
        <span className="absolute -top-3 -right-[14px] flex size-[50px] items-center justify-center rounded-full bg-[#e2493e] font-['Inter',sans-serif] text-[27px] leading-none text-white">
          {app.badge}
        </span>
      )}
      <span className={"mt-5 size-2 rounded-full " + (app.running ? "bg-[#a995cc]" : "bg-transparent")} />
    </button>
  );
}

function Dock() {
  return (
    <div className="flex h-[164px] items-start gap-[34px] rounded-[52px] border-2 border-[#4c3d6b] bg-[linear-gradient(90deg,#1e1433_0%,#20153f_30%,#231350_55%,#431660_68%,#4c1672_76%,#3b1462_88%,#241446_100%)] px-5 pt-[21px]">
      {LEFT_APPS.map((a) => (
        <DockApp key={a.name} app={a} />
      ))}
      <span className="mx-[14px] h-[120px] w-[2px] bg-[#6a5a8c]" />
      {RIGHT_APPS.map((a) => (
        <DockApp key={a.name} app={a} />
      ))}
      <span className="mx-[14px] h-[120px] w-[2px] bg-[#6a5a8c]" />
      <DockApp app={{ name: "Trash", icon: <Trash /> }} />
    </div>
  );
}

export default function App() {
  return (
    <div className="flex h-screen flex-col overflow-hidden bg-[linear-gradient(90deg,#08021c_0%,#0d0428_30%,#15063e_52%,#2c084c_62%,#3a0a5c_70%,#1c0748_84%,#0c0330_100%)]">
      <MenuBar />
      <div className="flex min-h-0 flex-1 flex-col bg-black pt-[2px]">
        <div className="relative flex min-h-0 flex-1 flex-col overflow-hidden rounded-[20px] bg-[#1f2120]">
          <TabStrip />
          <Toolbar />
          <Page />
          <div className="pointer-events-none absolute inset-0 rounded-[20px] border-2 border-white/35 border-x-white/20 border-b-white/50" />
        </div>
      </div>
      <div className="flex shrink-0 flex-col items-center pb-[10px]">
        <div className="mb-1 flex w-full items-start">
          <div className="h-7 w-[92px] border-b-2 border-[#333637] bg-[#131516]" />
          <div className="flex h-[46px] min-w-0 flex-1 overflow-hidden rounded-b-[24px] border-2 border-t-0 border-[#333236] bg-[#111014]">
            <div className="w-[306px] border-r-2 border-black bg-[#1a181e]" />
            <div className="ml-[1010px] flex w-[30px] items-center justify-center gap-[6px] bg-[#1a1a1a] pt-3">
              <span className="h-4 w-[2px] bg-[#3c3c3c]" />
              <span className="h-4 w-[2px] bg-[#3c3c3c]" />
            </div>
            <div className="ml-auto w-7 border-l border-[#2c2c2c] bg-[#191a19]" />
          </div>
          <div className="h-7 w-[282px] border-b-2 border-[#333637] bg-[#131516]" />
        </div>
        <Dock />
      </div>
    </div>
  );
}
